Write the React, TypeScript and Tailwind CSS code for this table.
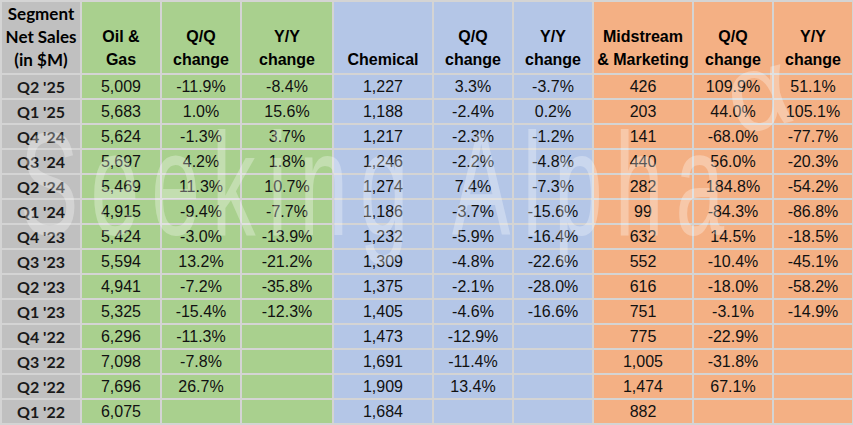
const HEADERS = [
  'Segment\nNet Sales\n(in $M)',
  'Oil &\nGas',
  'Q/Q\nchange',
  'Y/Y\nchange',
  'Chemical',
  'Q/Q\nchange',
  'Y/Y\nchange',
  'Midstream\n& Marketing',
  'Q/Q\nchange',
  'Y/Y\nchange',
];

const ROWS: string[][] = [
  ["Q2 '25", '5,009', '-11.9%', '-8.4%', '1,227', '3.3%', '-3.7%', '426', '109.9%', '51.1%'],
  ["Q1 '25", '5,683', '1.0%', '15.6%', '1,188', '-2.4%', '0.2%', '203', '44.0%', '105.1%'],
  ["Q4 '24", '5,624', '-1.3%', '3.7%', '1,217', '-2.3%', '-1.2%', '141', '-68.0%', '-77.7%'],
  ["Q3 '24", '5,697', '4.2%', '1.8%', '1,246', '-2.2%', '-4.8%', '440', '56.0%', '-20.3%'],
  ["Q2 '24", '5,469', '11.3%', '10.7%', '1,274', '7.4%', '-7.3%', '282', '184.8%', '-54.2%'],
  ["Q1 '24", '4,915', '-9.4%', '-7.7%', '1,186', '-3.7%', '-15.6%', '99', '-84.3%', '-86.8%'],
  ["Q4 '23", '5,424', '-3.0%', '-13.9%', '1,232', '-5.9%', '-16.4%', '632', '14.5%', '-18.5%'],
  ["Q3 '23", '5,594', '13.2%', '-21.2%', '1,309', '-4.8%', '-22.6%', '552', '-10.4%', '-45.1%'],
  ["Q2 '23", '4,941', '-7.2%', '-35.8%', '1,375', '-2.1%', '-28.0%', '616', '-18.0%', '-58.2%'],
  ["Q1 '23", '5,325', '-15.4%', '-12.3%', '1,405', '-4.6%', '-16.6%', '751', '-3.1%', '-14.9%'],
  ["Q4 '22", '6,296', '-11.3%', '', '1,473', '-12.9%', '', '775', '-22.9%', ''],
  ["Q3 '22", '7,098', '-7.8%', '', '1,691', '-11.4%', '', '1,005', '-31.8%', ''],
  ["Q2 '22", '7,696', '26.7%', '', '1,909', '13.4%', '', '1,474', '67.1%', ''],
  ["Q1 '22", '6,075', '', '', '1,684', '', '', '882', '', ''],
];

// background per column: label, oil & gas, chemical, midstream
const BG = [
  'bg-[#c0c0c0]',
  'bg-[#a9d08e]', 'bg-[#a9d08e]', 'bg-[#a9d08e]',
  'bg-[#b4c6e7]', 'bg-[#b4c6e7]', 'bg-[#b4c6e7]',
  'bg-[#f4b084]', 'bg-[#f4b084]', 'bg-[#f4b084]',
];

const LABEL_FONT = "font-['Lato','Liberation_Sans',sans-serif]";
const BODY_FONT = "font-['Liberation_Sans',Arial,sans-serif]";

export default function App() {
  return (
    <div className="relative w-[853px] h-[425px] overflow-hidden bg-[#d4d4d4]">
      <div className="grid grid-cols-[78px_78px_78px_90px_98px_78px_78px_98px_78px_78px] grid-rows-[71px_repeat(14,23px)] gap-[2px] pt-[2px] pl-[2px]">
        {HEADERS.map((h, i) => (
          <div
            key={h + i}
            className={`${BG[i]} flex items-end justify-center pb-[2px] text-center whitespace-pre-line font-bold text-black leading-[23px] ${i === 0 ? `${LABEL_FONT} text-[17px]` : `${BODY_FONT} text-[16px]`}`}
          >
            {h}
          </div>
        ))}
        {ROWS.map(row =>
          row.map((cell, i) => (
            <div
              key={row[0] + i}
              className={`${BG[i]} flex items-center justify-center leading-[23px] text-[16px] ${i === 0 ? `${LABEL_FONT} font-bold text-[#1a1a1a]` : `${BODY_FONT} text-[#111]`}`}
            >
              {cell}
            </div>
          ))
        )}
      </div>

      {/* Seeking Alpha watermark */}
      <div className="pointer-events-none absolute inset-0">
        <div
          className={`${BODY_FONT} absolute left-[20px] top-[112px] origin-top-left scale-x-60 whitespace-nowrap text-[146px] leading-[146px] tracking-[20px] text-white/30`}
        >
          Seeking Alpha
        </div>
        <div
          className={`${BODY_FONT} absolute left-[726px] top-[36px] rotate-[-15deg] text-[110px] leading-[110px] text-white/30`}
        >
          α
        </div>
      </div>
    </div>
  );
}
